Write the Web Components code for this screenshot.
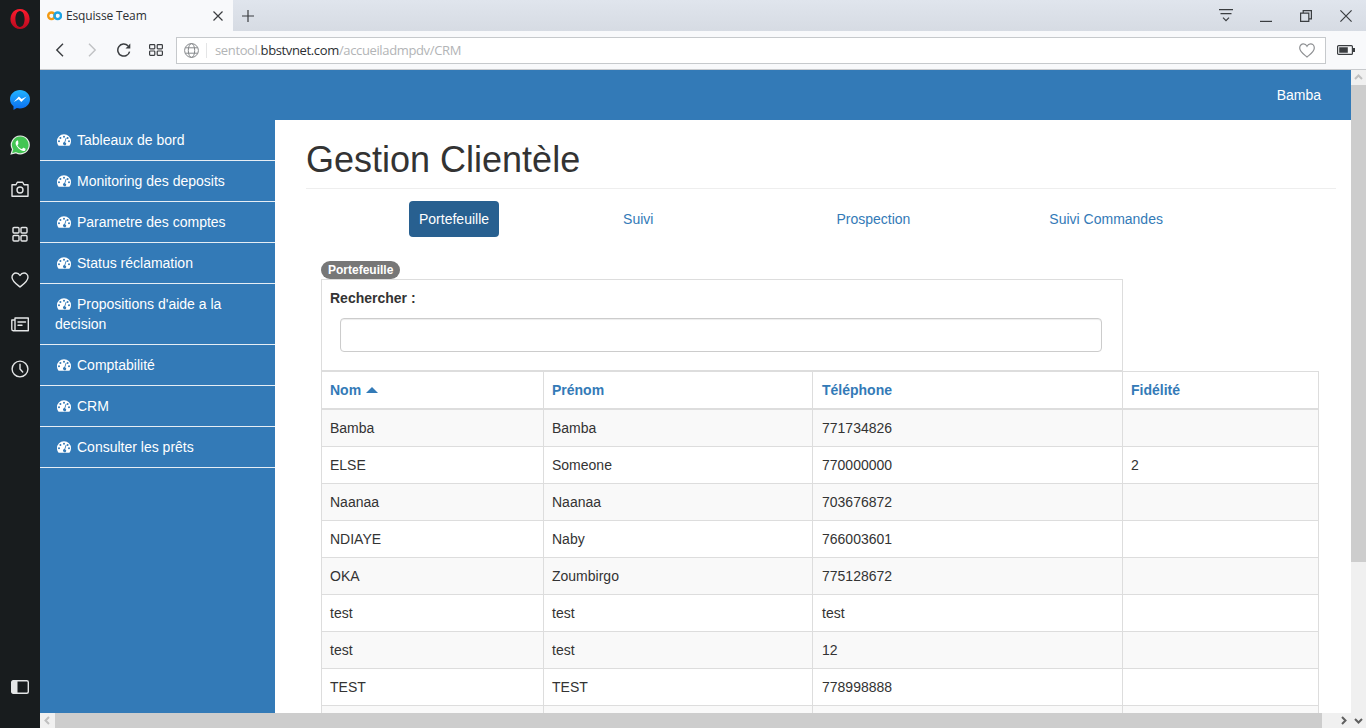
<!DOCTYPE html>
<html lang="fr">
<head>
<meta charset="utf-8">
<title>Esquisse Team</title>
<style>
html, body { margin: 0; height: 100%; overflow: hidden; }
body { font-family: "Liberation Sans", Arial, sans-serif; font-size: 14px; color: #333; }
</style>
</head>
<body>
<browser-window>
  <top-bar slot="head" user="Bamba"></top-bar>
  <side-menu slot="side">
    <menu-item>Tableaux de bord</menu-item>
    <menu-item>Monitoring des deposits</menu-item>
    <menu-item>Parametre des comptes</menu-item>
    <menu-item>Status réclamation</menu-item>
    <menu-item>Propositions d'aide a la decision</menu-item>
    <menu-item>Comptabilité</menu-item>
    <menu-item>CRM</menu-item>
    <menu-item>Consulter les prêts</menu-item>
  </side-menu>
  <page-title>Gestion Clientèle</page-title>
  <nav-pills>
    <nav-pill active style="margin-left:103px">Portefeuille</nav-pill>
    <nav-pill style="margin-left:114px">Suivi</nav-pill>
    <nav-pill style="margin-left:163px">Prospection</nav-pill>
    <nav-pill style="margin-left:119px">Suivi Commandes</nav-pill>
  </nav-pills>
  <search-panel legend="Portefeuille" label="Rechercher :"></search-panel>
  <client-table></client-table>
</browser-window>

<script>
// opera side rail
const templateRail = document.createElement('template')
templateRail.innerHTML = `
<style>
:host { display: flex; flex-direction: column; width: 40px; background: #181c1e; align-items: center; padding-bottom: 21px; box-sizing: border-box; }
.cell { height: 45px; display: flex; align-items: center; justify-content: center; width: 100%; }
.logo { height: 38px; margin-bottom: 39px; }
.last { margin-top: auto; height: 40px; }
.up svg { margin-bottom: 2px; }
svg { display: block; }
.line { fill: none; stroke: #e4e6e7; stroke-width: 1.4; stroke-linejoin: round; stroke-linecap: round; }
</style>
<div class="cell logo">
  <svg width="20" height="22" viewBox="0 0 20 22"><defs><linearGradient id="op" x1="0" y1="0" x2="0" y2="1"><stop offset="0" stop-color="#ff1b2d"/><stop offset="1" stop-color="#b70a1f"/></linearGradient></defs><path fill="url(#op)" fill-rule="evenodd" d="M10 1a9.600 10 0 1 0 .01 0zM10 3c2.800 0 4.600 3.600 4.600 8s-1.800 8-4.600 8-4.600-3.600-4.600-8S7.200 3 10 3z"/></svg>
</div>
<div class="cell">
  <svg width="20" height="20" viewBox="0 0 20 20"><defs><linearGradient id="ms" x1="0" y1="0" x2="0" y2="1"><stop offset="0" stop-color="#22b4ff"/><stop offset="1" stop-color="#0a6cf0"/></linearGradient></defs><path fill="url(#ms)" d="M10 0C4.500 0 0 4 0 9.200c0 2.900 1.300 5.300 3.500 7V20l3.300-1.900c1 .3 2.100.4 3.200.4 5.500 0 10-4.100 10-9.300S15.500 0 10 0z"/><path fill="#fff" d="M3.700 11.900 8.900 6.400l2.700 2.700 5-2.700-5.300 5.600-2.600-2.700z"/></svg>
</div>
<div class="cell">
  <svg width="20" height="20" viewBox="0 0 20 20"><path fill="#43c553" stroke="#e8efe8" stroke-width="1.200" d="M10.200 1A8.900 8.900 0 0 0 2.600 14.400L1.200 19l4.800-1.300A8.900 8.900 0 1 0 10.200 1z"/><path fill="#fff" d="M7.300 5.700c-.3 0-.7.100-1 .5-.4.400-1.200 1.200-1.200 2.800s1.200 3.200 1.400 3.400c.2.200 2.300 3.600 5.700 4.900 2.800 1.100 3.400.9 4-.1.200-.5.800-1.400.5-1.800l-2.300-1.300c-.3-.1-.5-.2-.8.200l-1 1.200c-.2.200-.4.300-.7.100-.3-.1-1.400-.5-2.700-1.700-1-.9-1.700-2-1.900-2.300-.2-.3 0-.5.100-.7l.9-1.200c.1-.2.100-.4 0-.6L8.100 6.200c-.2-.5-.5-.5-.8-.5z" transform="translate(1.200 .6) scale(.86)"/></svg>
</div>
<div class="cell up">
  <svg width="18" height="16" viewBox="0 0 18 16"><path class="line" d="M1 3.700h4l1.300-2.500h5.400L13 3.700h4v11.600H1z"/><circle class="line" cx="9" cy="9" r="3"/></svg>
</div>
<div class="cell up">
  <svg width="16" height="16" viewBox="0 0 16 16"><g class="line"><rect x="1" y="1.500" width="6" height="5.500" rx="1"/><rect x="9" y="1.500" width="6" height="5.500" rx="1"/><rect x="1" y="9.500" width="6" height="5.500" rx="1"/><rect x="9" y="9.500" width="6" height="5.500" rx="1"/></g></svg>
</div>
<div class="cell">
  <svg width="18" height="16" viewBox="0 0 18 16"><path class="line" d="M9 15C5 11.800 1 9 1 5.200 1 2.700 2.900 1 5 1c1.700 0 3.100.9 4 2.500C9.900 1.900 11.300 1 13 1c2.100 0 4 1.700 4 4.200C17 9 13 11.800 9 15z"/></svg>
</div>
<div class="cell">
  <svg width="18" height="15" viewBox="0 0 18 15"><path class="line" d="M4 3V1h13.300v12.800H2.200A1.500 1.500 0 0 1 .8 12.300V3zM4 3v10.500M7 5h7.500M7 8.200h4"/></svg>
</div>
<div class="cell up">
  <svg width="18" height="18" viewBox="0 0 18 18"><circle class="line" cx="9" cy="9" r="7.900"/><path class="line" d="M9 4.300V9l2.700 3"/></svg>
</div>
<div class="cell last">
  <svg width="18" height="14" viewBox="0 0 18 14"><rect x=".7" y=".7" width="16.600" height="12.600" rx="1.500" fill="#181c1e" stroke="#e4e6e7" stroke-width="1.400"/><path fill="#e4e6e7" d="M1 1h5.500v12H1z"/></svg>
</div>
`
class OperaRail extends HTMLElement {
   constructor() {
      super()
      this.attachShadow({ mode: 'open' })
      this.shadowRoot.appendChild(templateRail.content.cloneNode(true))
   }
}

// tabs and address bar
const templateChrome = document.createElement('template')
templateChrome.innerHTML = `
<style>
:host { display: block; font-family: "Open Sans", "Liberation Sans", sans-serif; color: #2c2f33; }
.strip { height: 31px; display: flex; background: linear-gradient(#e0e5ed, #d6dbe3); }
.tab { width: 193px; box-sizing: border-box; background: #f8f9fb; display: flex; align-items: center; padding: 0 10px 0 7px; font-size: 12px; }
.tab span { flex: 1; margin-left: 4px; letter-spacing: -.15px; }
.plus { width: 30px; display: flex; align-items: center; justify-content: center; }
.win { margin-left: auto; display: flex; }
.win div { width: 40px; display: flex; align-items: center; justify-content: center; }
.tools { height: 39px; box-sizing: border-box; background: #f8f9fb; border-bottom: 1px solid #c8cacd; display: flex; align-items: center; padding-left: 4px; }
.btn { width: 32px; height: 100%; display: flex; align-items: center; justify-content: center; }
.url { flex: 1; height: 27px; margin-left: 4px; box-sizing: border-box; background: #fff; border: 1px solid #c6c9cc; display: flex; align-items: center; font-size: 13px; color: #b2b4b6; }
.globe { width: 29px; display: flex; justify-content: center; border-right: 1px solid #e4e5e6; margin-right: 8px; }
.addr { flex: 1; letter-spacing: -.36px; }
.addr b { font-weight: 400; color: #2c2f33; }
.heart { margin-right: 10px; display: flex; }
.batt { width: 40px; display: flex; justify-content: center; }
svg { display: block; }
.s { fill: none; stroke: #3a3d40; stroke-width: 1.200; }
</style>
<div class="strip">
  <div class="tab">
    <svg width="15" height="10" viewBox="0 0 15 10"><circle cx="4.500" cy="4.800" r="3.300" fill="none" stroke="#f39a12" stroke-width="2.400"/><circle cx="10.700" cy="4.800" r="3.300" fill="none" stroke="#1ea4e4" stroke-width="2.400"/></svg>
    <span>Esquisse Team</span>
    <svg width="10" height="10" viewBox="0 0 10 10"><path class="s" d="M.5.500l9 9M9.500.500l-9 9"/></svg>
  </div>
  <div class="plus"><svg width="12" height="12" viewBox="0 0 12 12"><path class="s" d="M6 0v12M0 6h12"/></svg></div>
  <div class="win">
    <div><svg width="14" height="13" viewBox="0 0 14 13"><path class="s" d="M0 .600h14M1.500 4.600h11M4 8.600l3 3 3-3"/></svg></div>
    <div><svg width="12" height="12" viewBox="0 0 12 12"><path class="s" d="M0 11.400h12"/></svg></div>
    <div><svg width="12" height="12" viewBox="0 0 12 12"><path class="s" d="M.6 3.200h8.200v8.200H.6zM3.200 3V.6h8.200v8.200H9"/></svg></div>
    <div><svg width="12" height="12" viewBox="0 0 12 12"><path class="s" d="M.4.400l11.200 11.200M11.600.400.400 11.600"/></svg></div>
  </div>
</div>
<div class="tools">
  <div class="btn"><svg width="10" height="14" viewBox="0 0 10 14"><path fill="none" stroke="#3a3d40" stroke-width="1.400" d="M8 .8 1.800 7 8 13.200"/></svg></div>
  <div class="btn"><svg width="10" height="14" viewBox="0 0 10 14"><path fill="none" stroke="#c0c2c4" stroke-width="1.400" d="M2 .8 8.200 7 2 13.200"/></svg></div>
  <div class="btn"><svg width="14" height="14" viewBox="0 0 14 14"><path fill="none" stroke="#3a3d40" stroke-width="1.500" d="M12.600 8.600A6 6 0 1 1 11 2.800"/><path fill="#3a3d40" d="M13.300 .6v4.800H8.500z"/></svg></div>
  <div class="btn"><svg width="14" height="12" viewBox="0 0 14 12"><g class="s"><rect x=".6" y=".6" width="5.200" height="4.300" rx=".8"/><rect x="8.200" y=".6" width="5.200" height="4.300" rx=".8"/><rect x=".6" y="7" width="5.200" height="4.300" rx=".8"/><rect x="8.200" y="7" width="5.200" height="4.300" rx=".8"/></g></svg></div>
  <div class="url">
    <div class="globe"><svg width="15" height="15" viewBox="0 0 15 15"><g fill="none" stroke="#85888b"><circle cx="7.500" cy="7.500" r="6.900"/><ellipse cx="7.500" cy="7.500" rx="3.200" ry="6.900"/><path d="M1.400 4.800h12.200M1.400 10.200h12.200"/></g></svg></div>
    <div class="addr">sentool.<b>bbstvnet.com</b>/accueiladmpdv/CRM</div>
    <div class="heart"><svg width="16" height="15" viewBox="0 0 16 15"><path fill="none" stroke="#8e9093" stroke-width="1.200" d="M8 14C4.500 11 .7 8.600.7 4.900.7 2.500 2.500.9 4.400.9 5.900.9 7.200 1.700 8 3.200 8.800 1.700 10.100.9 11.600.9c1.900 0 3.700 1.600 3.700 4C15.300 8.600 11.500 11 8 14z"/></svg></div>
  </div>
  <div class="batt"><svg width="18" height="10" viewBox="0 0 18 10"><rect x=".6" y=".6" width="14.800" height="8.800" rx="1" fill="none" stroke="#3a3d40" stroke-width="1.200"/><path fill="#3a3d40" d="M2.200 2.200h8.600v5.600H2.200zM16 3h2v4h-2z"/></svg></div>
</div>
`
class BrowserChrome extends HTMLElement {
   constructor() {
      super()
      this.attachShadow({ mode: 'open' })
      this.shadowRoot.appendChild(templateChrome.content.cloneNode(true))
   }
}

// fake scrollbars, arrows only
const templateScroll = document.createElement('template')
templateScroll.innerHTML = `
<style>
:host { display: flex; background: #f0f0f0; }
:host([dir="v"]) { flex-direction: column; width: 15px; }
:host([dir="h"]) { height: 15px; }
.arrow { width: 15px; height: 15px; display: flex; align-items: center; justify-content: center; flex: none; }
.thumb { background: #cdcdcd; }
:host([dir="v"]) .thumb { height: 477px; }
:host([dir="h"]) .thumb { flex: 1; }
:host([dir="h"]) .arrow.end { margin-left: 14px; }
:host([dir="v"]) .arrow.end { margin-top: auto; }
svg { display: block; }
</style>
<div class="arrow start"></div><div class="thumb"></div><div class="arrow end"></div>
`
class FakeScrollbar extends HTMLElement {
   constructor() {
      super()
      this.attachShadow({ mode: 'open' })
      this.shadowRoot.appendChild(templateScroll.content.cloneNode(true))
   }
   connectedCallback() {
      const v = this.getAttribute('dir') === 'v'
      const paths = v ? ['M1 6 4.500 2.500 8 6', 'M1 3 4.500 6.500 8 3'] : ['M6 1 2.500 4.500 6 8', 'M3 1 6.500 4.500 3 8']
      const colours = ['#c0c0c0', '#606060']
      const arrows = this.shadowRoot.querySelectorAll('.arrow')
      arrows.forEach((el, i) => {
         el.innerHTML = `<svg width="9" height="9" viewBox="0 0 9 9"><path fill="none" stroke="${colours[i]}" stroke-width="2" d="${paths[i]}"/></svg>`
      })
   }
}

// whole window
const templateWindow = document.createElement('template')
templateWindow.innerHTML = `
<style>
:host { display: grid; grid-template-columns: 40px 1fr; height: 728px; width: 1366px; }
.right { display: grid; grid-template-rows: 70px 1fr; min-width: 0; min-height: 0; }
.view { display: grid; grid-template-columns: 1fr 15px; grid-template-rows: 1fr 15px; min-height: 0; }
.site { display: grid; grid-template-rows: 50px 1fr; min-height: 0; overflow: hidden; }
.body { display: grid; grid-template-columns: 235px 1fr; min-height: 0; overflow: hidden; }
.content { background: #fff; padding: 0 15px 0 31px; overflow: hidden; min-height: 0; }
fake-scrollbar[dir="v"] { grid-row: 1 / 3; grid-column: 2; }
</style>
<opera-rail></opera-rail>
<div class="right">
  <browser-chrome></browser-chrome>
  <div class="view">
    <div class="site">
      <slot name="head"></slot>
      <div class="body">
        <slot name="side"></slot>
        <div class="content"><slot></slot></div>
      </div>
    </div>
    <fake-scrollbar dir="v"></fake-scrollbar>
    <fake-scrollbar dir="h"></fake-scrollbar>
  </div>
</div>
`
class BrowserWindow extends HTMLElement {
   constructor() {
      super()
      this.attachShadow({ mode: 'open' })
      this.shadowRoot.appendChild(templateWindow.content.cloneNode(true))
   }
}

const templateTopBar = document.createElement('template')
templateTopBar.innerHTML = `
<style>
:host { display: flex; align-items: center; justify-content: flex-end; background: #337ab7; color: #fff; padding-right: 30px; height: 50px; }
</style>
<span class="user"></span>
`
class TopBar extends HTMLElement {
   constructor() {
      super()
      this.attachShadow({ mode: 'open' })
      this.shadowRoot.appendChild(templateTopBar.content.cloneNode(true))
   }
   connectedCallback() {
      this.shadowRoot.querySelector('.user').textContent = this.getAttribute('user')
   }
}

const templateSide = document.createElement('template')
templateSide.innerHTML = `
<style>
:host { display: block; background: #337ab7; }
</style>
<slot></slot>
`
class SideMenu extends HTMLElement {
   constructor() {
      super()
      this.attachShadow({ mode: 'open' })
      this.shadowRoot.appendChild(templateSide.content.cloneNode(true))
   }
}

const templateItem = document.createElement('template')
templateItem.innerHTML = `
<style>
:host { display: block; color: #fff; padding: 10px 15px 10px 15px; line-height: 20px; border-bottom: 1px solid #e6eef5; }
svg { display: inline-block; width: 14px; height: 12px; margin: 0 6px 0 2px; vertical-align: -1px; }
</style>
<svg viewBox="0 0 14 12"><path fill="#fff" fill-rule="evenodd" d="M7 .300A7 7 0 0 0 0 7.300c0 1.700.6 3.200 1.600 4.400h10.800c1-1.200 1.600-2.700 1.600-4.400A7 7 0 0 0 7 .300zM7 1.700a1 1 0 1 1 0 2 1 1 0 0 1 0-2zM3.400 3.100a1 1 0 1 1 0 2 1 1 0 0 1 0-2zM10.600 3.100a1 1 0 1 1 0 2 1 1 0 0 1 0-2zM2 6.300a1 1 0 1 1 0 2 1 1 0 0 1 0-2zM12 6.300a1 1 0 1 1 0 2 1 1 0 0 1 0-2zM8.700 3.900l.8.300-1.400 4.200a1.500 1.500 0 1 1-1.700 2.200 1.500 1.500 0 0 1 1-2.500z"/></svg><slot></slot>
`
class MenuItem extends HTMLElement {
   constructor() {
      super()
      this.attachShadow({ mode: 'open' })
      this.shadowRoot.appendChild(templateItem.content.cloneNode(true))
   }
}

const templateHeading = document.createElement('template')
templateHeading.innerHTML = `
<style>
:host { display: block; height: 69px; box-sizing: border-box; border-bottom: 1px solid #eee; padding-top: 20px; font-size: 36px; line-height: 40px; color: #333; }
</style>
<slot></slot>
`
class PageTitle extends HTMLElement {
   constructor() {
      super()
      this.attachShadow({ mode: 'open' })
      this.shadowRoot.appendChild(templateHeading.content.cloneNode(true))
   }
}

const templatePills = document.createElement('template')
templatePills.innerHTML = `
<style>
:host { display: flex; margin-top: 12px; }
</style>
<slot></slot>
`
class NavPills extends HTMLElement {
   constructor() {
      super()
      this.attachShadow({ mode: 'open' })
      this.shadowRoot.appendChild(templatePills.content.cloneNode(true))
   }
}

const templatePill = document.createElement('template')
templatePill.innerHTML = `
<style>
:host { display: block; padding: 8px 10px; line-height: 20px; color: #337ab7; border-radius: 4px; }
:host([active]) { background: #286090; color: #fff; }
</style>
<slot></slot>
`
class NavPill extends HTMLElement {
   constructor() {
      super()
      this.attachShadow({ mode: 'open' })
      this.shadowRoot.appendChild(templatePill.content.cloneNode(true))
   }
}

const templateSearch = document.createElement('template')
templateSearch.innerHTML = `
<style>
:host { display: block; margin: 24px 0 0 15px; width: 802px; }
.badge { display: table; background: #777; color: #fff; font-size: 12px; font-weight: 700; line-height: 12px; padding: 3px 7px; border-radius: 10px; }
.box { border: 1px solid #ddd; height: 92px; box-sizing: border-box; padding: 10px 20px 0 8px; }
label { display: block; font-weight: 700; line-height: 17px; }
.field { display: block; box-sizing: border-box; width: 762px; height: 34px; margin: 11px 0 0 10px; background: #fff; border: 1px solid #ccc; border-radius: 4px; box-shadow: inset 0 1px 1px rgba(0,0,0,.075); }
</style>
<span class="badge"></span>
<div class="box">
  <label></label>
  <input class="field" type="text">
</div>
`
class SearchPanel extends HTMLElement {
   constructor() {
      super()
      this.attachShadow({ mode: 'open' })
      this.shadowRoot.appendChild(templateSearch.content.cloneNode(true))
   }
   connectedCallback() {
      this.shadowRoot.querySelector('.badge').textContent = this.getAttribute('legend')
      this.shadowRoot.querySelector('label').textContent = this.getAttribute('label')
   }
}

const clients = [
   ['Bamba', 'Bamba', '771734826', ''],
   ['ELSE', 'Someone', '770000000', '2'],
   ['Naanaa', 'Naanaa', '703676872', ''],
   ['NDIAYE', 'Naby', '766003601', ''],
   ['OKA', 'Zoumbirgo', '775128672', ''],
   ['test', 'test', 'test', ''],
   ['test', 'test', '12', ''],
   ['TEST', 'TEST', '778998888', ''],
   ['', '', '', '']
]

const templateTable = document.createElement('template')
templateTable.innerHTML = `
<style>
:host { display: block; margin-left: 15px; width: 997px; }
table { border-collapse: collapse; table-layout: fixed; width: 997px; }
th, td { border: 1px solid #ddd; padding: 8px; line-height: 20px; text-align: left; box-sizing: border-box; }
th:nth-child(3), td:nth-child(3) { padding-left: 9px; }
th { color: #337ab7; font-weight: 700; border-bottom-width: 2px; height: 37px; }
td { height: 37px; }
tbody tr:nth-child(odd) { background: #f9f9f9; }
.up { display: inline-block; width: 0; height: 0; border: 6.500px solid transparent; border-top: 0; border-bottom: 6.500px solid #337ab7; margin-left: 1px; vertical-align: 2px; }
</style>
<table>
  <colgroup><col style="width:222px"><col style="width:269px"><col style="width:310px"><col style="width:196px"></colgroup>
  <thead><tr><th>Nom <span class="up"></span></th><th>Prénom</th><th>Téléphone</th><th>Fidélité</th></tr></thead>
  <tbody></tbody>
</table>
`
class ClientTable extends HTMLElement {
   constructor() {
      super()
      this.attachShadow({ mode: 'open' })
      this.shadowRoot.appendChild(templateTable.content.cloneNode(true))
   }
   connectedCallback() {
      const body = this.shadowRoot.querySelector('tbody')
      clients.forEach(row => {
         const tr = document.createElement('tr')
         row.forEach(val => {
            const td = document.createElement('td')
            td.textContent = val
            tr.appendChild(td)
         })
         body.appendChild(tr)
      })
   }
}

customElements.define('opera-rail', OperaRail)
customElements.define('browser-chrome', BrowserChrome)
customElements.define('fake-scrollbar', FakeScrollbar)
customElements.define('browser-window', BrowserWindow)
customElements.define('top-bar', TopBar)
customElements.define('side-menu', SideMenu)
customElements.define('menu-item', MenuItem)
customElements.define('page-title', PageTitle)
customElements.define('nav-pills', NavPills)
customElements.define('nav-pill', NavPill)
customElements.define('search-panel', SearchPanel)
customElements.define('client-table', ClientTable)
</script>
</body>
</html>
